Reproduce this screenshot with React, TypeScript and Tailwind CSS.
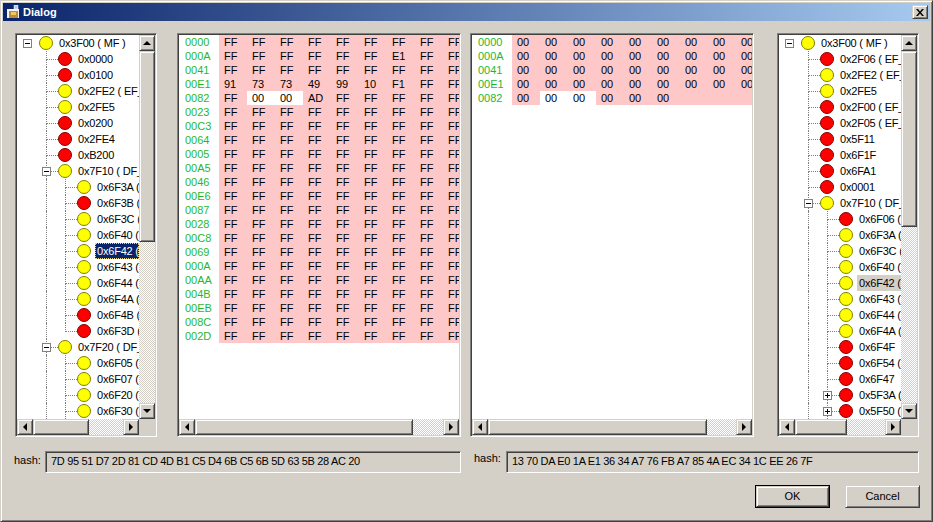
import React from 'react';

type TreeRow = {
  label: string;
  red?: boolean;
  level: number;
  exp?: 'minus' | 'plus';
  guides?: boolean[];
  last?: boolean;
  sel?: 'focus' | 'grey';
};

const raised =
  'border border-t-[#d4d0c8] border-l-[#d4d0c8] border-b-[#404040] border-r-[#404040] shadow-[inset_1px_1px_0_#fff,inset_-1px_-1px_0_#808080]';
const sunken =
  'border border-t-[#808080] border-l-[#808080] border-b-white border-r-white shadow-[inset_1px_1px_0_#404040,inset_-1px_-1px_0_#d4d0c8]';
const checker =
  'bg-[conic-gradient(#d4d0c8_25%,#fff_0_50%,#d4d0c8_0_75%,#fff_0)] bg-[length:2px_2px]';

const G1 = [false];
const G2 = [false, true];

const leftTree: TreeRow[] = [
  { label: '0x3F00 ( MF )', level: 0, exp: 'minus' },
  { label: '0x0000', red: true, level: 1, guides: G1 },
  { label: '0x0100', red: true, level: 1, guides: G1 },
  { label: '0x2FE2 ( EF_', level: 1, guides: G1 },
  { label: '0x2FE5', level: 1, guides: G1 },
  { label: '0x0200', red: true, level: 1, guides: G1 },
  { label: '0x2FE4', red: true, level: 1, guides: G1 },
  { label: '0xB200', red: true, level: 1, guides: G1 },
  { label: '0x7F10 ( DF_', level: 1, guides: G1, exp: 'minus' },
  { label: '0x6F3A (', level: 2, guides: G2 },
  { label: '0x6F3B (', red: true, level: 2, guides: G2 },
  { label: '0x6F3C (', level: 2, guides: G2 },
  { label: '0x6F40 (', level: 2, guides: G2 },
  { label: '0x6F42 (', level: 2, guides: G2, sel: 'focus' },
  { label: '0x6F43 (', level: 2, guides: G2 },
  { label: '0x6F44 (', level: 2, guides: G2 },
  { label: '0x6F4A (', level: 2, guides: G2 },
  { label: '0x6F4B (', red: true, level: 2, guides: G2 },
  { label: '0x6F3D (', red: true, level: 2, guides: G2, last: true },
  { label: '0x7F20 ( DF_', level: 1, guides: G1, exp: 'minus' },
  { label: '0x6F05 (', level: 2, guides: G2 },
  { label: '0x6F07 (', level: 2, guides: G2 },
  { label: '0x6F20 (', level: 2, guides: G2 },
  { label: '0x6F30 (', level: 2, guides: G2 },
];

const rightTree: TreeRow[] = [
  { label: '0x3F00 ( MF )', level: 0, exp: 'minus' },
  { label: '0x2F06 ( EF_', red: true, level: 1, guides: G1 },
  { label: '0x2FE2 ( EF_', level: 1, guides: G1 },
  { label: '0x2FE5', level: 1, guides: G1 },
  { label: '0x2F00 ( EF_', red: true, level: 1, guides: G1 },
  { label: '0x2F05 ( EF_', red: true, level: 1, guides: G1 },
  { label: '0x5F11', red: true, level: 1, guides: G1 },
  { label: '0x6F1F', red: true, level: 1, guides: G1 },
  { label: '0x6FA1', red: true, level: 1, guides: G1 },
  { label: '0x0001', red: true, level: 1, guides: G1 },
  { label: '0x7F10 ( DF_', level: 1, guides: G1, exp: 'minus' },
  { label: '0x6F06 (', red: true, level: 2, guides: G2 },
  { label: '0x6F3A (', level: 2, guides: G2 },
  { label: '0x6F3C (', level: 2, guides: G2 },
  { label: '0x6F40 (', level: 2, guides: G2 },
  { label: '0x6F42 (', level: 2, guides: G2, sel: 'grey' },
  { label: '0x6F43 (', level: 2, guides: G2 },
  { label: '0x6F44 (', level: 2, guides: G2 },
  { label: '0x6F4A (', level: 2, guides: G2 },
  { label: '0x6F4F', red: true, level: 2, guides: G2 },
  { label: '0x6F54 (', red: true, level: 2, guides: G2 },
  { label: '0x6F47', red: true, level: 2, guides: G2 },
  { label: '0x5F3A (', red: true, level: 2, guides: G2, exp: 'plus' },
  { label: '0x5F50 (', red: true, level: 2, guides: G2, exp: 'plus' },
];

const addrs1 = [
  '0000', '000A', '0041', '00E1', '0082', '0023', '00C3', '0064', '0005', '00A5', '0046',
  '00E6', '0087', '0028', '00C8', '0069', '000A', '00AA', '004B', '00EB', '008C', '002D',
];
const ff = Array(9).fill('FF');
const hex1: string[][] = addrs1.map(() => ff);
hex1[1] = ['FF', 'FF', 'FF', 'FF', 'FF', 'FF', 'E1', 'FF', 'FF'];
hex1[3] = ['91', '73', '73', '49', '99', '10', 'F1', 'FF', 'FF'];
hex1[4] = ['FF', '00', '00', 'AD', 'FF', 'FF', 'FF', 'FF', 'FF'];

const zeros = Array(9).fill('00');
const hex2 = [zeros, zeros, zeros, zeros, ['00', '00', '00', '00', '00', '00']];
const addrs2 = addrs1.slice(0, 5);

function Arrow({ dir }: { dir: 'up' | 'down' | 'left' | 'right' }) {
  const pts = {
    up: '0,4 8,4 4,0',
    down: '0,0 8,0 4,4',
    left: '4,0 4,8 0,4',
    right: '0,0 0,8 4,4',
  }[dir];
  const vertical = dir === 'up' || dir === 'down';
  return (
    <svg width={vertical ? 8 : 4} height={vertical ? 4 : 8} viewBox={vertical ? '0 0 8 4' : '0 0 4 8'}>
      <polygon points={pts} fill="#000" />
    </svg>
  );
}

function ScrollBtn({ dir }: { dir: 'up' | 'down' | 'left' | 'right' }) {
  return (
    <div className={`w-4 h-4 shrink-0 flex items-center justify-center bg-[#d4d0c8] ${raised}`}>
      <Arrow dir={dir} />
    </div>
  );
}

function HBar({ thumb }: { thumb: number }) {
  return (
    <div className="h-4 shrink-0 flex">
      <ScrollBtn dir="left" />
      <div className={`shrink-0 bg-[#d4d0c8] ${raised}`} style={{ width: thumb }} />
      <div className={`flex-1 ${checker}`} />
      <ScrollBtn dir="right" />
    </div>
  );
}

function VBar({ thumb }: { thumb: number }) {
  return (
    <div className="w-4 shrink-0 flex flex-col">
      <ScrollBtn dir="up" />
      <div className={`shrink-0 bg-[#d4d0c8] ${raised}`} style={{ height: thumb }} />
      <div className={`flex-1 ${checker}`} />
      <ScrollBtn dir="down" />
    </div>
  );
}

function Expander({ kind }: { kind: 'minus' | 'plus' }) {
  return (
    <svg width="9" height="9" viewBox="0 0 9 9" className="absolute left-[6px] top-[4px]">
      <rect x="0.5" y="0.5" width="8" height="8" fill="#fff" stroke="#808080" />
      <line x1="2" y1="4.5" x2="7" y2="4.5" stroke="#000" />
      {kind === 'plus' && <line x1="4.5" y1="2" x2="4.5" y2="7" stroke="#000" />}
    </svg>
  );
}

function Row({ row }: { row: TreeRow }) {
  const guides = row.guides || [];
  return (
    <div className="h-4 flex items-stretch whitespace-nowrap">
      {guides.map((g, i) => (
        <div key={i} className="w-[19px] shrink-0">
          {g && <div className="ml-[10px] h-full border-l border-dotted border-[#808080]" />}
        </div>
      ))}
      {row.level === 0 ? (
        <div className="w-[22px] shrink-0 relative">
          {row.exp && <Expander kind={row.exp} />}
        </div>
      ) : (
        <div className="w-[22px] shrink-0 relative flex flex-col">
          <div className="ml-[10px] h-[9px] shrink-0 border-l border-b border-dotted border-[#808080]" />
          {!row.last && <div className="ml-[10px] flex-1 border-l border-dotted border-[#808080]" />}
          {row.exp && <Expander kind={row.exp} />}
        </div>
      )}
      <div className={`w-[14px] h-[14px] shrink-0 mt-px rounded-full border ${row.red ? 'bg-[#ff0000] border-[#800000]' : 'bg-[#ffff00] border-[#808000]'}`} />
      <div
        className={`ml-[4px] flex-1 min-w-0 overflow-hidden pl-[2px] leading-4 tracking-[-0.2px] ${
          row.sel === 'focus'
            ? 'bg-[#0a246a] text-white outline outline-1 -outline-offset-1 outline-dotted outline-[#e8d48a]'
            : row.sel === 'grey'
              ? 'bg-[#d4d0c8] text-black'
              : 'text-black'
        }`}
      >
        {row.label}
      </div>
    </div>
  );
}

function Tree({ rows, vthumb, hthumb }: { rows: TreeRow[]; vthumb: number; hthumb: number }) {
  return (
    <div className={`w-[142px] shrink-0 p-px bg-white flex flex-col ${sunken}`}>
      <div className="flex-1 min-h-0 flex">
        <div className="flex-1 min-w-0 overflow-hidden">
          {rows.map((r, i) => (
            <Row key={i} row={r} />
          ))}
        </div>
        <VBar thumb={vthumb} />
      </div>
      <div className="flex">
        <div className="flex-1 min-w-0">
          <HBar thumb={hthumb} />
        </div>
        <div className="w-4 shrink-0 bg-[#d4d0c8]" />
      </div>
    </div>
  );
}

function HexPanel({
  addrs,
  rows,
  blank,
  thumb,
}: {
  addrs: string[];
  rows: string[][];
  blank: boolean;
  thumb: number;
}) {
  return (
    <div className={`w-[284px] shrink-0 p-px bg-white flex flex-col ${sunken}`}>
      <div className="flex-1 min-h-0 overflow-hidden">
        {addrs.map((a, i) => (
          <div key={i} className="h-[14px] flex leading-[14px] whitespace-nowrap">
            <div className="w-10 shrink-0 pl-[6px] text-[#1fb82f]">{a}</div>
            {rows[i].map((v, j) => (
              <div
                key={j}
                className={`w-7 shrink-0 pl-[5px] text-black ${
                  blank && i === 4 && (j === 1 || j === 2) ? 'bg-white' : 'bg-[#ffc8c8]'
                }`}
              >
                {v}
              </div>
            ))}
            <div className="flex-1 bg-[#ffc8c8]" />
          </div>
        ))}
      </div>
      <HBar thumb={thumb} />
    </div>
  );
}

export default function App() {
  return (
    <div className="w-[933px] h-[522px] overflow-hidden bg-[#d4d0c8] font-['Liberation_Sans',sans-serif] text-[11px] text-black border border-t-[#d4d0c8] border-l-[#d4d0c8] border-b-[#404040] border-r-[#404040] shadow-[inset_1px_1px_0_#fff,inset_-1px_-1px_0_#808080] p-[2px] flex flex-col">
      <div className="h-[18px] shrink-0 flex items-center bg-[linear-gradient(90deg,#0a246a,#a6caf0)] pl-[3px] pr-[2px]">
        <svg width="14" height="14" viewBox="0 0 14 14" className="shrink-0">
          <rect x="1" y="4" width="12" height="9" fill="#f3f3f3" />
          <rect x="3" y="6" width="9" height="7" fill="#c08a3a" />
          <rect x="5" y="7" width="5" height="3" fill="#f0c860" />
          <rect x="8" y="0" width="4" height="4" fill="#b8c8f0" stroke="#fff" strokeWidth="0.5" />
        </svg>
        <span className="ml-[3px] font-bold text-white leading-none">Dialog</span>
        <div className={`ml-auto w-4 h-[14px] flex items-center justify-center bg-[#d4d0c8] ${raised}`}>
          <svg width="8" height="7" viewBox="0 0 8 7">
            <path d="M0 0h2l2 2.5L6 0h2L5 3.5 8 7H6L4 4.5 2 7H0l3-3.5z" fill="#000" />
          </svg>
        </div>
      </div>

      <div className="flex-1 min-h-0 flex flex-col pt-3 pl-3 pr-[11px]">
        <div className="h-[404px] shrink-0 flex">
          <Tree rows={leftTree} vthumb={191} hthumb={56} />
          <div className="w-5 shrink-0" />
          <HexPanel addrs={addrs1} rows={hex1} blank thumb={218} />
          <div className="w-[9px] shrink-0" />
          <HexPanel addrs={addrs2} rows={hex2} blank thumb={219} />
          <div className="w-[23px] shrink-0" />
          <Tree rows={rightTree} vthumb={176} hthumb={52} />
        </div>

        <div className="mt-[14px] h-[22px] shrink-0 flex -ml-px">
          <div className="w-[447px] shrink-0 flex">
            <div className="w-[31px] shrink-0 leading-4 pt-[1px]">hash:</div>
            <div className={`flex-1 pl-[5px] leading-[19px] tracking-[-0.33px] whitespace-nowrap overflow-hidden ${sunken}`}>
              7D 95 51 D7 2D 81 CD 4D B1 C5 D4 6B C5 6B 5D 63 5B 28 AC 20
            </div>
          </div>
          <div className="ml-[13px] flex-1 flex">
            <div className="w-[32px] shrink-0 leading-4 -mt-px">hash:</div>
            <div className={`flex-1 pl-[5px] leading-[19px] tracking-[-0.33px] whitespace-nowrap overflow-hidden ${sunken}`}>
              13 70 DA E0 1A E1 36 34 A7 76 FB A7 85 4A EC 34 1C EE 26 7F
            </div>
          </div>
        </div>

        <div className="mt-3 flex justify-end gap-[15px] -mr-px">
          <button className="w-[75px] h-[23px] border border-black bg-[#d4d0c8] text-[11px]">
            <div className={`h-full flex items-center justify-center ${raised}`}>OK</div>
          </button>
          <button className={`w-[75px] h-[23px] bg-[#d4d0c8] text-[11px] ${raised}`}>Cancel</button>
        </div>
      </div>
    </div>
  );
}
